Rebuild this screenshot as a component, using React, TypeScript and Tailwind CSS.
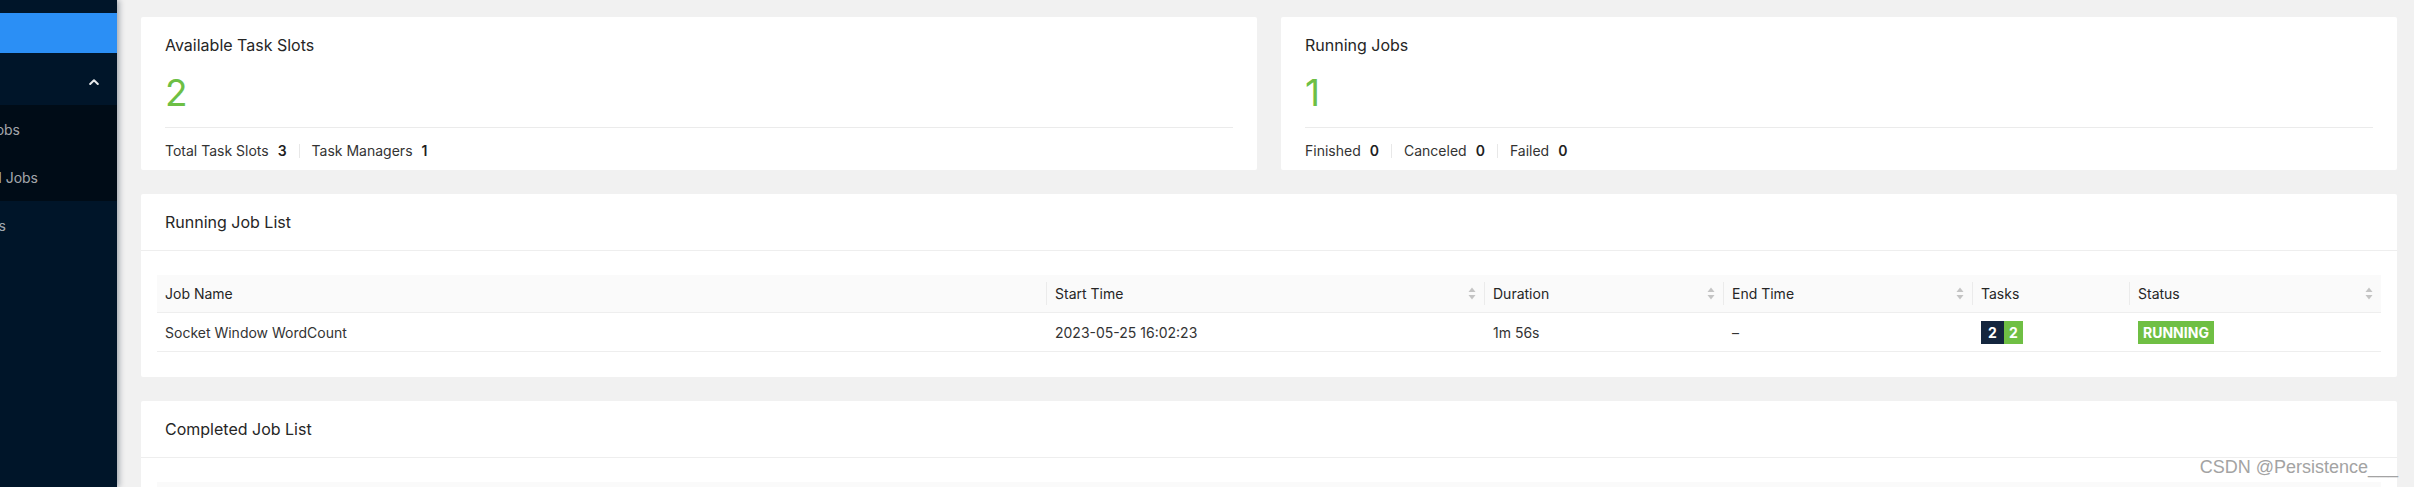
import React from "react";

const SortIcon = () => (
  <svg width="8" height="13" viewBox="0 0 8 13" className="shrink-0">
    <path d="M4 0.5 L7.5 5 L0.5 5 Z" fill="#c4c4c4" />
    <path d="M0.5 8 L7.5 8 L4 12.5 Z" fill="#c4c4c4" />
  </svg>
);

type Col = { title: string; sort: boolean };
const cols: Col[] = [
  { title: "Job Name", sort: false },
  { title: "Start Time", sort: true },
  { title: "Duration", sort: true },
  { title: "End Time", sort: true },
  { title: "Tasks", sort: false },
  { title: "Status", sort: true },
];

const gridCols =
  "grid grid-cols-[889px_438px_239px_249px_157px_252px]";

function TableHeader() {
  return (
    <div className={`${gridCols} h-[38px] bg-[#fafafa] border-b border-[#eeeeee] text-[14px] text-[#262626]`}>
      {cols.map((c, i) => (
        <div key={c.title} className="flex items-center min-w-0">
          {i > 0 ? <div className="w-px h-[23px] bg-[#ebebeb] shrink-0" /> : null}
          <span className="ml-[8px] whitespace-nowrap">{c.title}</span>
          {c.sort ? (
            <span className="ml-auto mr-[8px] flex items-center">
              <SortIcon />
            </span>
          ) : null}
        </div>
      ))}
    </div>
  );
}

function StatCard({
  title,
  value,
  items,
}: {
  title: string;
  value: string;
  items: { label: string; value: string }[];
}) {
  return (
    <div className="bg-white rounded-[2px] h-[153px] px-[24px] pt-[16px] flex flex-col">
      <div className="h-[24px] leading-[24px] text-[16px] text-[#262626]">{title}</div>
      <div className="h-[70px] flex items-center text-[37px] leading-none text-[#6dbf45]">{value}</div>
      <div className="border-t border-[#ebebeb] pt-[12px] flex items-center text-[14px] leading-[22px] text-[#333333]">
        {items.map((it, i) => (
          <React.Fragment key={it.label}>
            {i > 0 ? <div className="w-px h-[14px] bg-[#e8e8e8] mx-[12px]" /> : null}
            <span>{it.label}</span>
            <span className="ml-[9px] font-semibold text-[#1f1f1f]">{it.value}</span>
          </React.Fragment>
        ))}
      </div>
    </div>
  );
}

export default function App() {
  return (
    <div
      className="relative flex h-screen w-full overflow-hidden bg-[#f1f1f1]"
      style={{ fontFamily: "Inter, 'Noto Sans', sans-serif" }}
    >
      {/* Sidebar */}
      <aside className="relative z-10 w-[117px] shrink-0 h-full bg-[#001529] shadow-[2px_0_6px_rgba(0,21,41,0.35)] overflow-hidden text-[14px] text-[rgba(255,255,255,0.65)]">
        <div className="h-[13px]" />
        <div className="h-[40px] bg-[#2b8ff5] flex items-center overflow-hidden text-white">
          <span className="ml-[-100px] whitespace-nowrap shrink-0">Overview</span>
        </div>
        <div className="h-[52px] flex items-center pt-[6px] overflow-hidden">
          <span className="ml-[-100px] whitespace-nowrap shrink-0">Jobs</span>
          <span className="ml-auto mr-[18px] text-[rgba(255,255,255,0.9)]">
            <svg width="10" height="6" viewBox="0 0 10 6" className="block">
              <path d="M1.2 5 L5 1.2 L8.8 5" stroke="currentColor" strokeWidth="2" fill="none" strokeLinecap="round" strokeLinejoin="round" />
            </svg>
          </span>
        </div>
        <div className="bg-[#000c17]">
          <div className="h-[48px] flex items-center justify-end pr-[97px] overflow-hidden">
            <span className="whitespace-nowrap shrink-0">Running Jobs</span>
          </div>
          <div className="h-[48px] flex items-center justify-end pr-[79px] overflow-hidden">
            <span className="whitespace-nowrap shrink-0">Completed Jobs</span>
          </div>
        </div>
        <div className="h-[48px] flex items-center justify-end pr-[111px] overflow-hidden">
          <span className="whitespace-nowrap shrink-0">Task Managers</span>
        </div>
      </aside>

      {/* Main */}
      <main className="flex-1 min-w-0 h-full overflow-hidden pt-[17px] pl-[24px] pr-[17px] flex flex-col gap-[24px]">
        <div className="grid grid-cols-2 gap-[24px] shrink-0">
          <StatCard
            title="Available Task Slots"
            value="2"
            items={[
              { label: "Total Task Slots", value: "3" },
              { label: "Task Managers", value: "1" },
            ]}
          />
          <StatCard
            title="Running Jobs"
            value="1"
            items={[
              { label: "Finished", value: "0" },
              { label: "Canceled", value: "0" },
              { label: "Failed", value: "0" },
            ]}
          />
        </div>

        <div className="bg-white rounded-[2px] shrink-0">
          <div className="h-[57px] border-b border-[#eeeeee] px-[24px] pb-[1px] flex items-center text-[16px] text-[#262626]">
            Running Job List
          </div>
          <div className="pt-[24px] px-[16px] pb-[25px]">
            <TableHeader />
            <div className={`${gridCols} h-[39px] border-b border-[#eeeeee] text-[14px] text-[#333333]`}>
              <div className="flex items-center pl-[8px]">Socket Window WordCount</div>
              <div className="flex items-center pl-[9px]">2023-05-25 16:02:23</div>
              <div className="flex items-center pl-[9px]">1m 56s</div>
              <div className="flex items-center pl-[9px]">–</div>
              <div className="flex items-center pl-[9px]">
                <span className="w-[23px] h-[23px] bg-[#14263e] text-white font-bold flex items-center justify-center">2</span>
                <span className="w-[19px] h-[23px] bg-[#6fbf44] text-white font-bold flex items-center justify-center">2</span>
              </div>
              <div className="flex items-center pl-[9px]">
                <span className="h-[23px] px-[5px] bg-[#6fbf44] text-white font-bold flex items-center">RUNNING</span>
              </div>
            </div>
          </div>
        </div>

        <div className="bg-white rounded-[2px] shrink-0">
          <div className="h-[57px] border-b border-[#eeeeee] px-[24px] pb-[1px] flex items-center text-[16px] text-[#262626]">
            Completed Job List
          </div>
          <div className="pt-[24px] px-[16px] pb-[25px]">
            <TableHeader />
          </div>
        </div>
      </main>

      <div
        className="absolute right-[16px] top-[457px] text-[18px] leading-[21px] text-[#a3a3a3] whitespace-nowrap"
        style={{ fontFamily: "'Liberation Sans', Arial, sans-serif" }}
      >
        CSDN @Persistence___
      </div>
    </div>
  );
}
